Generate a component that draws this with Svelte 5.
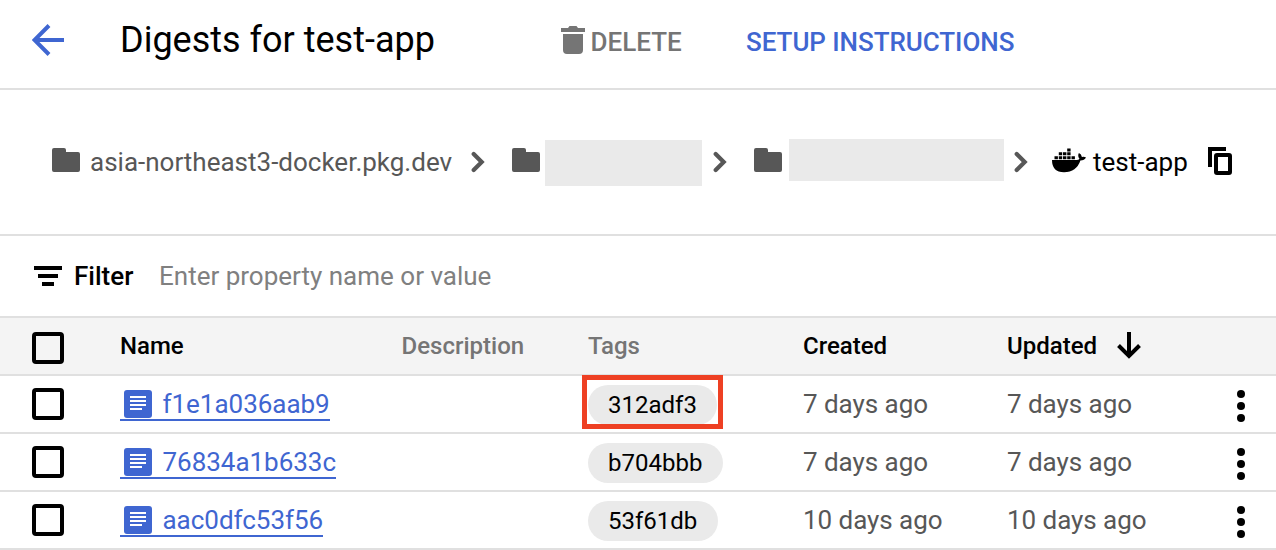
<script>
  const rows = [
    { name: 'f1e1a036aab9', tag: '312adf3', time: '7 days ago', marked: true },
    { name: '76834a1b633c', tag: 'b704bbb', time: '7 days ago', marked: false },
    { name: 'aac0dfc53f56', tag: '53f61db', time: '10 days ago', marked: false }
  ];
</script>

{#snippet folder()}
  <svg class="folder" width="28" height="24" viewBox="0 0 28 24"><path d="M2 0h10q2 0 2 2v2h12q2 0 2 2v16q0 2-2 2H2q-2 0-2-2V2q0-2 2-2z" /></svg>
{/snippet}

{#snippet chevron()}
  <svg class="chevron" width="14" height="22" viewBox="0 0 14 22"><path d="M2.700 3l8 8-8 8" /></svg>
{/snippet}

<main>
  <header>
    <svg class="back" width="32" height="32" viewBox="0 0 32 32"><path d="M32 16H3M17 1.5L2.5 16 17 30.5" /></svg>
    <h1>Digests for test-app</h1>
    <button class="delete">
      <svg width="24" height="28" viewBox="0 0 24 28"><path d="M0 2h7l1.5-2h7L17 2h7v4H0zM2 8h20v16q0 4-4 4H6q-4 0-4-4z" /></svg>
      <span>DELETE</span>
    </button>
    <button class="setup">SETUP INSTRUCTIONS</button>
  </header>

  <nav>
    {@render folder()}
    <span class="host">asia-northeast3-docker.pkg.dev</span>
    {@render chevron()}
    {@render folder()}
    <span class="mask project"></span>
    {@render chevron()}
    {@render folder()}
    <span class="mask repo"></span>
    {@render chevron()}
    <svg class="docker" width="34" height="25" viewBox="0 0 34 25">
      <path d="M0 12h24.5q2.400 0 3-1.200-2.200-2.800-.6-5.800 2.500 1 3 4 2.400-.6 4.100.6-1.500 3-5.600 3Q24.500 24.200 12 24.200 0 24.200 0 12z" />
      <path d="M2.500 8.200h3.400v3H2.500zM6.800 8.200h3.400v3H6.800zM11 8.200h3.400v3H11zM15.200 8.200h3.400v3h-3.400zM19.500 8.200h3.400v3h-3.400zM6.800 4.300h3.400v3H6.800zM11 4.300h3.400v3H11zM15.200 4.300h3.400v3h-3.400zM15.200.4h3.400v3h-3.400z" />
    </svg>
    <span class="current">test-app</span>
    <svg class="copy" width="24" height="28" viewBox="0 0 24 28"><path d="M2 20V2h16" /><rect x="8" y="8" width="14" height="18" rx="1" /></svg>
  </nav>

  <section class="filter">
    <svg width="28" height="20" viewBox="0 0 28 20"><path d="M0 0h28v4H0zM4 8h20v4H4zM8 16h12v4H8z" /></svg>
    <strong>Filter</strong>
    <span class="hint">Enter property name or value</span>
  </section>

  <div class="row head">
    <span class="check"></span>
    <b>Name</b>
    <b class="muted">Description</b>
    <b class="muted">Tags</b>
    <b>Created</b>
    <b class="sorted">Updated
      <svg width="24" height="28" viewBox="0 0 24 28"><path d="M12 0v24M1.500 13.500L12 24l10.500-10.500" /></svg>
    </b>
    <span></span>
  </div>

  {#each rows as row}
    <div class="row">
      <span class="check"></span>
      <div class="name">
        <a href="#{row.name}">
          <svg width="28" height="28" viewBox="0 0 28 28"><rect width="28" height="28" rx="3" /><path d="M6 7h16M6 11h16M6 15h16M6 19h12" /></svg>
          <span>{row.name}</span>
        </a>
      </div>
      <span></span>
      <div class="tagcell">
        <span class="tag">{row.tag}</span>
        {#if row.marked}<span class="mark"></span>{/if}
      </div>
      <span class="time">{row.time}</span>
      <span class="time">{row.time}</span>
      <svg class="more" width="8" height="32" viewBox="0 0 8 32"><circle cx="4" cy="4" r="4" /><circle cx="4" cy="16" r="4" /><circle cx="4" cy="28" r="4" /></svg>
    </div>
  {/each}
</main>

<style>
  :global(body) { margin: 0; background: #fff; overflow: hidden; }
  main { width: 1276px; height: 550px; font-family: Roboto, sans-serif; font-size: 26px; color: #000; white-space: nowrap; overflow: hidden; }
  svg { flex: none; display: block; }
  header { display: flex; align-items: center; height: 88px; border-bottom: 2px solid #e0e0e0; padding-left: 32px; }
  .back { fill: none; stroke: #3f66d1; stroke-width: 4; margin-top: -8px; }
  h1 { font-size: 36px; font-weight: 400; line-height: 42px; width: 441px; margin: -8px 0 0 56px; }
  button { border: 0; padding: 0; background: none; font: 500 26px/30px Roboto, sans-serif; display: flex; align-items: center; margin-top: -4px; }
  .delete { color: #757575; width: 185px; }
  .delete svg { fill: #757575; margin-top: -4px; }
  .delete span { margin-left: 5.500px; }
  .setup { color: #3f66d1; letter-spacing: -0.05px; }
  nav { display: flex; align-items: center; height: 144px; border-bottom: 2px solid #e0e0e0; padding-left: 52px; }
  nav > * { flex: none; }
  .folder { fill: #575757; margin-top: -4px; }
  .host { color: #575757; width: 381px; margin-left: 10px; line-height: 30px; }
  .chevron { fill: none; stroke: #575757; stroke-width: 4.200; stroke-linecap: round; }
  .chevron + .folder { margin-left: 27px; }
  .mask { background: #eaeaea; }
  .project { width: 157px; height: 46px; margin: 2px 11px 0 5px; }
  .repo { width: 215px; height: 42px; margin: -4px 10px 0 7px; }
  .docker { margin: -4px 0 0 24px; }
  .current { width: 108px; margin-left: 7px; }
  .copy { margin: -2px 0 0 7px; fill: none; stroke: #000; stroke-width: 4; }
  .filter { display: flex; align-items: center; height: 80px; border-bottom: 2px solid #e0e0e0; padding-left: 34px; }
  .filter strong { font-weight: 500; width: 85px; margin-left: 12px; }
  .hint { color: #808080; }
  .row { display: grid; grid-template-columns: 88px 281.600px 186.400px 215px 204px 230px 39px; align-items: center; height: 56px; border-bottom: 2px solid #e0e0e0; padding-left: 32px; }
  .head { background: #f4f4f4; font-size: 24px; }
  .head b { font-weight: 500; }
  .head .muted { color: #757575; }
  .head .sorted { display: flex; align-items: center; gap: 20px; }
  .sorted svg { fill: none; stroke: #000; stroke-width: 4; }
  .check { box-sizing: border-box; width: 32px; height: 32px; border: 4px solid #000; border-radius: 4px; }
  .head .check { margin-top: 4px; }
  .name { display: flex; margin-top: 2px; }
  a { display: flex; align-items: center; box-sizing: border-box; height: 32px; padding: 1px 0 1px 4px; border-bottom: 2px solid #3f66d1; color: #3f66d1; text-decoration: none; }
  a svg { fill: #3f66d1; stroke: #fff; stroke-width: 2; }
  a svg rect { stroke: none; }
  a span { margin-left: 10.500px; letter-spacing: -0.03px; line-height: 28px; }
  .tagcell { position: relative; display: flex; margin-top: 2px; }
  .tag { height: 40px; line-height: 40px; border-radius: 20px; background: #eaeaea; padding: 0 20.500px 0 20px; font-size: 24px; }
  .mark { position: absolute; left: -6px; top: -10px; width: 131px; height: 44px; border: 5px solid #ee4023; }
  .time { color: #575757; letter-spacing: -0.04px; }
  .more { margin-top: 4px; }
</style>
